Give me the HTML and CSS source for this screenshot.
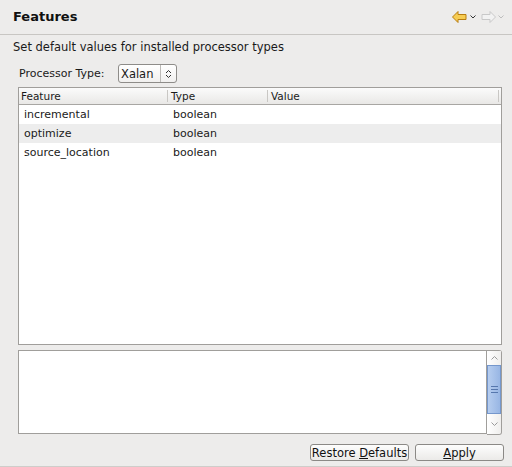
FILE: index.html
```html
<!DOCTYPE html>
<html>
<head>
<meta charset="utf-8">
<link rel="stylesheet" href="styles.css">
</head>
<body>
<div class="page">
  <div class="header">
    <div class="title">Features</div>
    <div class="nav">
      <svg class="arrow" width="15" height="12" viewBox="0 0 15 12"><path d="M0.5 6 L6 0.5 L6 3.5 L14 3.5 L14 8.5 L6 8.5 L6 11.5 Z" fill="#f6cc52" stroke="#b87d10" stroke-width="1"/></svg>
      <svg class="chev" width="6" height="4" viewBox="0 0 6 4"><path d="M0.5 0.5 L3 3 L5.5 0.5" fill="none" stroke="#333" stroke-width="1"/></svg>
      <svg class="arrow fwd" width="15" height="12" viewBox="0 0 15 12"><path d="M14.5 6 L9 0.5 L9 3.5 L1 3.5 L1 8.5 L9 8.5 L9 11.5 Z" fill="#f2f2f2" stroke="#c8c8c8" stroke-width="1"/></svg>
      <svg class="chev last" width="6" height="4" viewBox="0 0 6 4"><path d="M0.5 0.5 L3 3 L5.5 0.5" fill="none" stroke="#bdbdbd" stroke-width="1"/></svg>
    </div>
  </div>
  <div class="body">
    <div class="desc">Set default values for installed processor types</div>
    <div class="proc">
      <span class="proc-label">Processor Type:</span>
      <div class="combo">
        <span class="combo-text">Xalan</span>
        <span class="combo-btn">
          <svg width="7" height="10" viewBox="0 0 7 10"><path d="M1 4 L3.5 1.5 L6 4 M1 6 L3.5 8.5 L6 6" fill="none" stroke="#333" stroke-width="1"/></svg>
        </span>
      </div>
    </div>
    <div class="table">
      <div class="thead">
        <div class="th c1">Feature</div>
        <div class="th c2">Type</div>
        <div class="th c3">Value</div>
      </div>
      <div class="row"><div class="td c1">incremental</div><div class="td c2">boolean</div><div class="td c3"></div></div>
      <div class="row alt"><div class="td c1">optimize</div><div class="td c2">boolean</div><div class="td c3"></div></div>
      <div class="row"><div class="td c1">source_location</div><div class="td c2">boolean</div><div class="td c3"></div></div>
    </div>
    <div class="textarea">
      <div class="text"></div>
      <div class="scrollbar">
        <div class="sb-btn up"><svg width="7" height="4" viewBox="0 0 7 4"><path d="M0.5 3.5 L3.5 0.5 L6.5 3.5" fill="none" stroke="#9a9a9a" stroke-width="1"/></svg></div>
        <div class="thumb"><span class="grip"></span><span class="grip"></span><span class="grip"></span></div>
        <div class="sb-btn down"><svg width="7" height="4" viewBox="0 0 7 4"><path d="M0.5 0.5 L3.5 3.5 L6.5 0.5" fill="none" stroke="#9a9a9a" stroke-width="1"/></svg></div>
      </div>
    </div>
    <div class="buttons">
      <button class="btn restore">Restore <u>D</u>efaults</button>
      <button class="btn apply"><u>A</u>pply</button>
    </div>
  </div>
</div>
</body>
</html>
```
FILE: styles.css
```css
* { box-sizing: border-box; }
html, body { margin: 0; padding: 0; }
body {
  width: 512px;
  height: 467px;
  background: #edeceb;
  font-family: "DejaVu Sans", sans-serif;
  font-size: 11px;
  color: #1a1a1a;
  overflow: hidden;
}
.page {
  height: 467px;
  display: flex;
  flex-direction: column;
  border-bottom: 1px solid #cfcdca;
}
.header {
  height: 35px;
  flex: none;
  display: flex;
  align-items: center;
  justify-content: space-between;
  padding: 0 8px 0 13px;
  border-bottom: 1px solid #c8c6c3;
}
.title {
  font-weight: bold;
  font-size: 13px;
  color: #101010;
  margin-top: -2px;
}
.nav {
  display: flex;
  align-items: center;
  margin-top: -1px;
}
.arrow { display: block; }
.chev { display: block; margin: 1px 5px 0 3px; }
.chev.last { margin: 1px 0 0 2px; }
.body {
  flex: 1;
  display: flex;
  flex-direction: column;
  padding: 5px 10px 0 18px;
}
.desc {
  margin-left: -5px;
  font-size: 11.5px;
  line-height: 14px;
}
.proc {
  margin-top: 10px;
  display: flex;
  align-items: center;
  height: 19px;
}
.proc-label {
  margin-left: 1px;
  width: 99px;
}
.combo {
  width: 59px;
  height: 19px;
  border: 1px solid #8e8c89;
  border-radius: 3px;
  background: linear-gradient(#ffffff, #f1f0ef);
  display: flex;
  align-items: center;
}
.combo-text {
  flex: 1;
  padding-left: 2px;
  font-size: 11.5px;
}
.combo-btn {
  width: 16px;
  height: 100%;
  border-left: 1px solid #bcbab7;
  display: flex;
  align-items: center;
  justify-content: center;
}
.combo-btn svg { display: block; }
.table {
  margin-top: 4px;
  height: 258px;
  width: 484px;
  border: 1px solid #a09e9b;
  background: #fff;
  flex: none;
}
.thead {
  display: flex;
  height: 17px;
  border-bottom: 1px solid #a8a6a3;
  background: linear-gradient(#fbfbfb, #e9e8e6);
  font-size: 10.5px;
  line-height: 16px;
}
.th { padding-left: 2px; }
.th.c2, .th.c3 { border-left: 1px solid #c9c7c4; padding-left: 3px; margin: 2px 0 2px; line-height: 12px; }
.th.c3 { border-right: 1px solid #c9c7c4; margin-right: 2px; }
.c1 { width: 148px; }
.c2 { width: 100px; }
.c3 { flex: 1; }
.th.c1 { line-height: 16px; }
.row {
  display: flex;
  height: 19px;
  line-height: 19px;
}
.row.alt { background: #ededed; }
.td.c1 { padding-left: 5px; }
.td.c2 { padding-left: 6px; }
.textarea {
  margin-top: 5px;
  height: 84px;
  width: 484px;
  display: flex;
  flex: none;
}
.text {
  flex: 1;
  border: 1px solid #a09e9b;
  background: #fff;
}
.scrollbar {
  width: 15px;
  border: 1px solid #a09e9b;
  border-left: none;
  border-radius: 0 3px 3px 0;
  background: #f4f3f2;
  display: flex;
  flex-direction: column;
  margin-bottom: -1px;
}
.sb-btn {
  height: 14px;
  flex: none;
  display: flex;
  align-items: center;
  justify-content: center;
  background: linear-gradient(90deg, #ffffff, #efeeed);
}
.sb-btn svg { display: block; }
.sb-btn.down { height: 20px; border-radius: 0 0 3px 0; }
.thumb {
  flex: 1;
  background: linear-gradient(90deg, #b6cdef, #98b6e4);
  border: 1px solid #7597cc;
  display: flex;
  flex-direction: column;
  align-items: center;
  justify-content: center;
  gap: 2px;
}
.grip {
  width: 7px;
  height: 1px;
  background: #5677ad;
}
.buttons {
  margin-top: 10px;
  display: flex;
  justify-content: flex-end;
  gap: 6px;
  margin-right: -2px;
}
.btn {
  font-family: "DejaVu Sans", sans-serif;
  font-size: 11.5px;
  color: #111;
  height: 17px;
  padding: 0;
  line-height: 14px;
  white-space: nowrap;
  border: 1px solid #8b8986;
  border-radius: 3px;
  background: linear-gradient(#fdfdfd, #ebeae8);
}
.restore { width: 99px; }
.apply { width: 89px; }
```
